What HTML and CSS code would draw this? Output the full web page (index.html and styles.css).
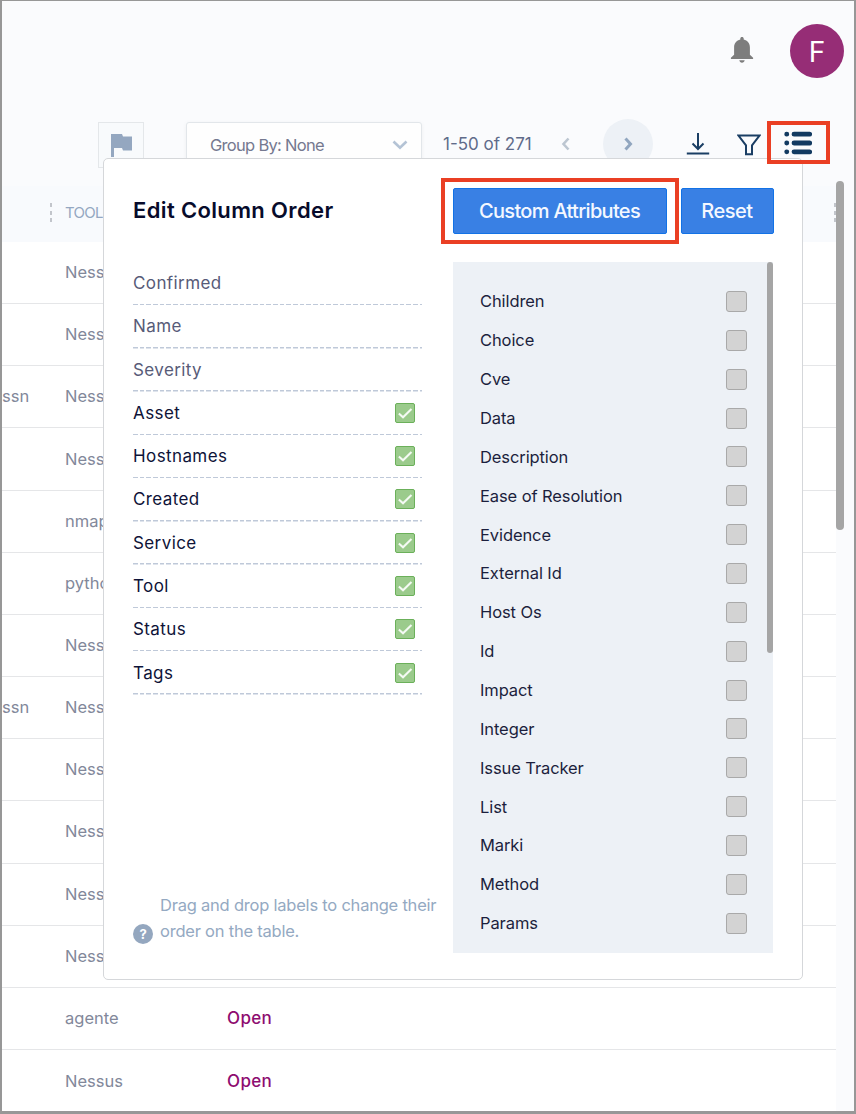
FILE: index.html
```
<!DOCTYPE html>
<html lang="en">
<head>
<meta charset="utf-8">
<title>Edit Column Order</title>
<link rel="stylesheet" href="styles.css">
</head>
<body>
<div class="page">
  <header class="topbar">
    <svg class="bell" viewBox="0 0 24 26"><path d="M12 0c1 0 1.700.7 1.700 1.600v.9c3.700.8 6.200 3.900 6.200 7.700v7.600l3.200 3v1.100H.900v-1.100l3.200-3v-7.600c0-3.800 2.500-6.900 6.200-7.700v-.9C10.300.700 11 0 12 0zM9.300 23.200h5.400c-.3 1.500-1.300 2.500-2.700 2.500s-2.400-1-2.700-2.500z"/></svg>
    <div class="avatar">F</div>
  </header>
  <div class="toolbar">
    <button class="flag-btn"><svg viewBox="0 0 21 23"><path d="M0 0h11l1 2.500h9v14h-9l-1-2.500H3v9H0z"/></svg></button>
    <div class="group-by"><span>Group By: None</span><svg viewBox="0 0 18 12"><path d="M2.500 2.500L9 8.800l6.500-6.300"/></svg></div>
    <span class="range">1-50 of 271</span>
    <button class="prev"><svg viewBox="0 0 10 14"><path d="M7.500 1.500L2.500 7l5 5.500"/></svg></button>
    <button class="next"><svg viewBox="0 0 10 14"><path d="M2.500 1.500l5 5.500-5 5.500"/></svg></button>
    <button class="download"><svg viewBox="0 0 24 24"><path d="M12 1v16M6.500 11.500l5.500 5.500 5.500-5.500M.8 21.500h22.400"/></svg></button>
    <button class="filter"><svg viewBox="0 0 24 22"><path d="M1.500 1.500h21l-7.500 9.800v8.900H9v-8.900z"/></svg></button>
    <div class="list-mark"><svg viewBox="0 0 28 24"><path d="M10 3.200h15.700M10 12h15.700M10 20.800h15.700M2.700 3.200h.1M2.700 12h.1M2.700 20.800h.1"/></svg></div>
  </div>
  <main class="table">
    <div class="thead"><i class="grip"></i><span>TOOL</span><i class="grip end"></i></div>
    <div class="tr"><span></span><span>Nessus</span></div>
    <div class="tr"><span></span><span>Nessus</span></div>
    <div class="tr"><span>ssn</span><span>Nessus</span></div>
    <div class="tr"><span></span><span>Nessus</span></div>
    <div class="tr"><span></span><span>nmap</span></div>
    <div class="tr"><span></span><span>python</span></div>
    <div class="tr"><span></span><span>Nessus</span></div>
    <div class="tr"><span>ssn</span><span>Nessus</span></div>
    <div class="tr"><span></span><span>Nessus</span></div>
    <div class="tr"><span></span><span>Nessus</span></div>
    <div class="tr"><span></span><span>Nessus</span></div>
    <div class="tr"><span></span><span>Nessus</span></div>
    <div class="tr"><span></span><span>agente</span><b>Open</b></div>
    <div class="tr"><span></span><span>Nessus</span><b>Open</b></div>
  </main>
  <div class="page-thumb"></div>

  <section class="popover">
    <div class="order">
      <h2>Edit Column Order</h2>
      <ul class="columns">
        <li class="fixed">Confirmed</li>
        <li class="fixed">Name</li>
        <li class="fixed">Severity</li>
        <li>Asset<i class="check"><svg viewBox="0 0 20 20"><path d="M3.200 10.500l4.600 4.300L17.200 5.600"/></svg></i></li>
        <li>Hostnames<i class="check"><svg viewBox="0 0 20 20"><path d="M3.200 10.500l4.600 4.300L17.200 5.600"/></svg></i></li>
        <li>Created<i class="check"><svg viewBox="0 0 20 20"><path d="M3.200 10.500l4.600 4.300L17.200 5.600"/></svg></i></li>
        <li>Service<i class="check"><svg viewBox="0 0 20 20"><path d="M3.200 10.500l4.600 4.300L17.200 5.600"/></svg></i></li>
        <li>Tool<i class="check"><svg viewBox="0 0 20 20"><path d="M3.200 10.500l4.600 4.300L17.200 5.600"/></svg></i></li>
        <li>Status<i class="check"><svg viewBox="0 0 20 20"><path d="M3.200 10.500l4.600 4.300L17.200 5.600"/></svg></i></li>
        <li>Tags<i class="check"><svg viewBox="0 0 20 20"><path d="M3.200 10.500l4.600 4.300L17.200 5.600"/></svg></i></li>
      </ul>
      <div class="hint"><i class="help">?</i><p>Drag and drop labels to change their<br>order on the table.</p></div>
    </div>
    <div class="custom">
      <div class="actions">
        <div class="mark"><button class="btn">Custom Attributes</button></div>
        <button class="btn reset">Reset</button>
      </div>
      <div class="attrs">
        <ul>
          <li>Children<i></i></li>
          <li>Choice<i></i></li>
          <li>Cve<i></i></li>
          <li>Data<i></i></li>
          <li>Description<i></i></li>
          <li>Ease of Resolution<i></i></li>
          <li>Evidence<i></i></li>
          <li>External Id<i></i></li>
          <li>Host Os<i></i></li>
          <li>Id<i></i></li>
          <li>Impact<i></i></li>
          <li>Integer<i></i></li>
          <li>Issue Tracker<i></i></li>
          <li>List<i></i></li>
          <li>Marki<i></i></li>
          <li>Method<i></i></li>
          <li>Params<i></i></li>
        </ul>
        <div class="thumb"></div>
      </div>
    </div>
  </section>
</div>
</body>
</html>
```
FILE: styles.css
```
* { box-sizing: border-box; margin: 0; padding: 0; }
body { font-family: Inter, "Liberation Sans", sans-serif; }
button { border: 0; background: none; font: inherit; }
ul { list-style: none; }
i { font-style: normal; }
svg { display: block; fill: none; }

.page {
  position: relative;
  width: 856px;
  height: 1114px;
  overflow: hidden;
  background: #fafbfd;
  border: solid #979797;
  border-width: 1px 2px 3px 2px;
}

.topbar { display: flex; justify-content: flex-end; align-items: center; height: 101px; padding: 0 10px 2px 0; gap: 36px; }
.bell { width: 24px; height: 26px; margin-top: -1px; fill: #7d7d7d; }
.avatar {
  width: 54px; height: 54px; border-radius: 50%;
  background: #962d76; color: #fff;
  font-size: 28px; line-height: 56px; text-align: center;
}

.toolbar { display: flex; align-items: center; height: 84px; padding-left: 96px; color: #5f6b8a; }
.flag-btn { width: 46px; height: 46px; margin-top: 2px; border: 1px solid #e4e7ea; background: #f8fafc; display: grid; place-items: center; }
.flag-btn svg { width: 21px; height: 23px; fill: #94a7c0; }
.group-by {
  display: flex; align-items: center; justify-content: space-between;
  width: 236px; height: 46px; margin: 2px 0 0 42px; padding: 0 12px 0 23px;
  border: 1px solid #e2e6ea; border-radius: 3px; background: #fefefe;
  box-shadow: 0 1px 4px #0000000d;
  font-size: 16.500px; color: #757990;
}
.group-by span { letter-spacing: -.700px; }
.group-by svg { width: 18px; height: 12px; stroke: #b4c3d5; stroke-width: 2.600; }
.range { width: 108px; margin-left: 21px; font-size: 17px; white-space: nowrap; }
.prev { width: 10px; margin-left: 10px; }
.prev svg, .next svg { width: 10px; height: 14px; stroke: #bcc6d1; stroke-width: 2.600; }
.next { display: grid; place-items: center; width: 50px; height: 50px; margin-left: 32px; border-radius: 50%; background: #edf1f6; }
.next svg { stroke: #91a6bf; stroke-width: 3; }
.download { margin-left: 33px; }
.download svg { width: 24px; height: 24px; stroke: #1a3e64; stroke-width: 2; }
.filter { margin: 2px 0 0 27px; }
.filter svg { width: 24px; height: 22px; stroke: #1a3e64; stroke-width: 2; }
.list-mark { position: relative; z-index: 2; display: grid; place-items: center; width: 63px; height: 43px; margin: -4px 0 0 6px; padding: 2px 2px 0 0; border: 4px solid #ea3f24; }
.list-mark svg { width: 28px; height: 24px; stroke: #123a61; stroke-width: 4.800; stroke-linecap: round; }

.table { width: 834px; }
.thead { display: flex; align-items: center; height: 56px; background: #f8fafd; padding: 0 0 4px 48px; font-size: 15px; letter-spacing: -.700px; color: #94a7c1; }
.grip { width: 2px; height: 19px; margin-right: 13px; background: repeating-linear-gradient(#c2c5cb 0 4px, transparent 4px 7.500px); }
.grip.end { margin: 0 0 0 auto; }
.tr {
  display: grid; grid-template-columns: 63px 162px 1fr; align-items: center;
  height: 62.170px; padding-bottom: 1px; border-bottom: 1px solid #e5e6e8; background: #fff;
  font-size: 16.500px; color: #82889a;
}
.tr:last-child { border-bottom: 0; }
.tr b { font-size: 17px; font-weight: 500; letter-spacing: .350px; color: #8e0c70; }
.page-thumb { position: absolute; top: 180px; right: 10px; width: 8px; height: 349px; border-radius: 4px; background: #a5a5a5; }

.popover {
  position: absolute; left: 101px; top: 157px;
  display: flex; width: 700px; height: 822px; padding: 19px 0 0 29px;
  border: 1px solid #d5d7da; border-radius: 5px; background: #fff;
}
.order { display: flex; flex-direction: column; width: 308px; }
h2 { height: 66px; font-size: 22px; line-height: 65px; font-weight: 600; letter-spacing: .360px; color: #070b2b; white-space: nowrap; }
.columns { width: 289px; margin-top: 18px; }
.columns li {
  display: flex; align-items: center; justify-content: space-between;
  height: 43.270px; padding: 0 7px 1px 0;
  font-size: 17px; letter-spacing: .400px; color: #0e1338;
  background: repeating-linear-gradient(90deg, #bfc9d9 0 4.600px, transparent 4.600px 6.670px) 0 100% / 100% 1.500px no-repeat;
}
.columns .fixed { color: #575b78; }
.check { width: 20px; height: 20px; border: 1px solid #6bb05a; border-radius: 2px; background: #9bcb8c; }
.check svg { width: 18px; height: 18px; stroke: #f4faf3; stroke-width: 2.300; }
.hint { display: flex; align-items: flex-end; gap: 7px; margin-top: 197px; white-space: nowrap; color: #94a9c2; font-size: 16.500px; line-height: 26px; letter-spacing: -.220px; }
.help { flex: none; width: 20px; height: 20px; margin-bottom: 0; border-radius: 50%; background: #94a7bf; color: #fff; font-size: 13px; font-weight: 700; line-height: 20px; text-align: center; }
.actions { display: flex; align-items: center; gap: 2px; }
.mark { width: 238px; height: 66px; padding: 6px 8px; border: 4px solid #ea3f24; }
.btn { width: 214px; height: 46px; padding-right: 1px; border: 1px solid #1272e6; border-radius: 2px; background: #3980e4; color: #f4f8ff; font-size: 20px; font-weight: 500; letter-spacing: -.680px; white-space: nowrap; }
.reset { width: 93px; letter-spacing: -.500px; }
.attrs { position: relative; width: 320px; height: 691px; margin: 18px 0 0 12px; padding: 20px 26px 20px 27px; background: #edf1f6; }
.attrs li { display: flex; align-items: center; justify-content: space-between; height: 38.870px; font-size: 16.500px; letter-spacing: -.100px; color: #1c1f3d; }
.attrs li i { width: 21px; height: 21px; border: 1px solid #a9a9a9; border-radius: 3px; background: #d3d3d3; }
.thumb { position: absolute; top: 0; right: 0; width: 6px; height: 391px; border-radius: 3px; background: #a5a5a5; }
```
